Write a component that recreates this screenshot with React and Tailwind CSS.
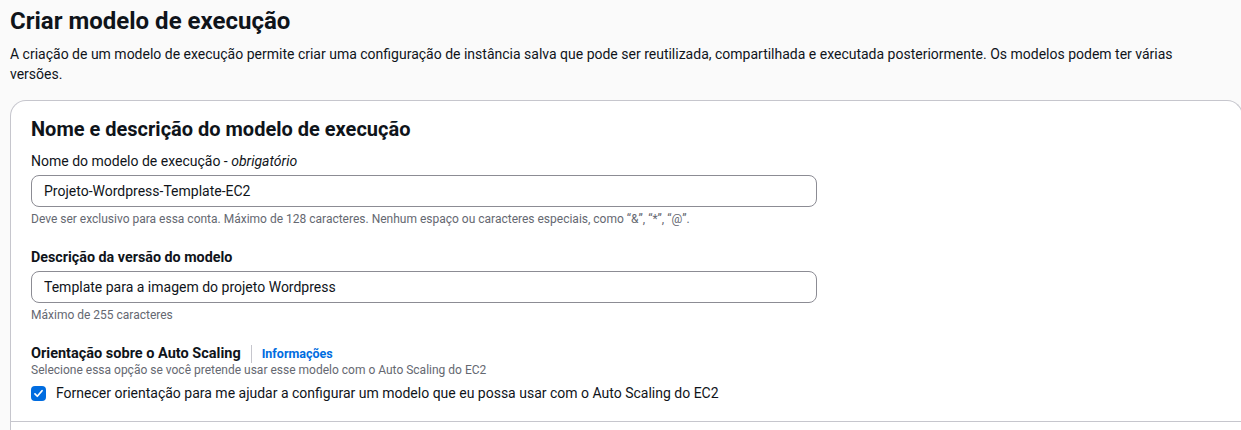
import React, { useState } from "react";

const FONT = { fontFamily: 'Roboto, "Open Sans", Arial, sans-serif' };

const TextField = ({ value, onChange }) => (
  <input
    className="w-[786px] h-8 rounded-lg border border-[#8c8c94] bg-white px-3 text-sm text-[#0f141a] outline-none"
    value={value}
    onChange={(e) => onChange(e.target.value)}
  />
);

export default function App() {
  const [name, setName] = useState("Projeto-Wordpress-Template-EC2");
  const [desc, setDesc] = useState("Template para a imagem do projeto Wordpress");
  const [guide, setGuide] = useState(true);

  return (
    <div className="min-h-[430px] bg-[#fafafa] pl-[10px] text-[#0f141a]" style={FONT}>
      {/* Page header */}
      <h1 className="pt-[6px] text-[24px] font-bold leading-[30px]">Criar modelo de execução</h1>
      <p className="mt-[8px] pr-4 text-sm leading-5">
        A criação de um modelo de execução permite criar uma configuração de instância salva que pode ser
        reutilizada, compartilhada e executada posteriormente. Os modelos podem ter várias versões.
      </p>

      {/* Container */}
      <div className="mt-[16px] -mr-[2px] rounded-t-2xl border border-b-0 border-[#c6c6cd] bg-white">
        <div className="px-[20px] pt-[16px] pb-[18px]">
          <h2 className="text-[20px] font-bold leading-[24px]">Nome e descrição do modelo de execução</h2>

          <div className="mt-[10px]">
            <label className="block text-sm leading-5">
              Nome do modelo de execução - <i>obrigatório</i>
            </label>
            <div className="mt-[4px]">
              <TextField value={name} onChange={setName} />
            </div>
            <p className="mt-[4px] text-xs leading-4 text-[#656871]">
              Deve ser exclusivo para essa conta. Máximo de 128 caracteres. Nenhum espaço ou caracteres especiais,
              como “&”, “*”, “@”.
            </p>
          </div>

          <div className="mt-[20px]">
            <label className="block text-[14.3px] font-bold leading-5">Descrição da versão do modelo</label>
            <div className="mt-[4px]">
              <TextField value={desc} onChange={setDesc} />
            </div>
            <p className="mt-[4px] text-xs leading-4 text-[#656871]">Máximo de 255 caracteres</p>
          </div>

          <div className="mt-[21px]">
            <div className="flex items-center">
              <span className="text-[14.5px] font-bold leading-5">Orientação sobre o Auto Scaling</span>
              <span className="mx-[10px] h-[18px] w-px bg-[#c6c6cd]" />
              <a className="text-[12.5px] font-bold leading-4 text-[#006ce0]" href="#">
                Informações
              </a>
            </div>
            <p className="-mt-[2px] text-xs leading-4 text-[#656871]">
              Selecione essa opção se você pretende usar esse modelo com o Auto Scaling do EC2
            </p>
            <label className="mt-[5px] flex cursor-pointer items-center gap-[10px] text-sm leading-5">
              <span
                className={
                  guide
                    ? "flex h-[15px] w-[15px] items-center justify-center rounded-[4px] bg-[#006ce0]"
                    : "flex h-[15px] w-[15px] items-center justify-center rounded-[4px] border-2 border-[#8c8c94] bg-white"
                }
              >
                {guide && (
                  <svg width="11" height="11" viewBox="0 0 14 14" fill="none">
                    <path d="M2.5 7.5 L5.5 10.5 L11.5 3.5" stroke="white" strokeWidth="2.2" strokeLinecap="round" strokeLinejoin="round" />
                  </svg>
                )}
              </span>
              <input type="checkbox" className="hidden" checked={guide} onChange={(e) => setGuide(e.target.checked)} />
              Fornecer orientação para me ajudar a configurar um modelo que eu possa usar com o Auto Scaling do EC2
            </label>
          </div>
        </div>
        <div className="h-10 border-t border-[#c6c6cd]" />
      </div>
    </div>
  );
}
